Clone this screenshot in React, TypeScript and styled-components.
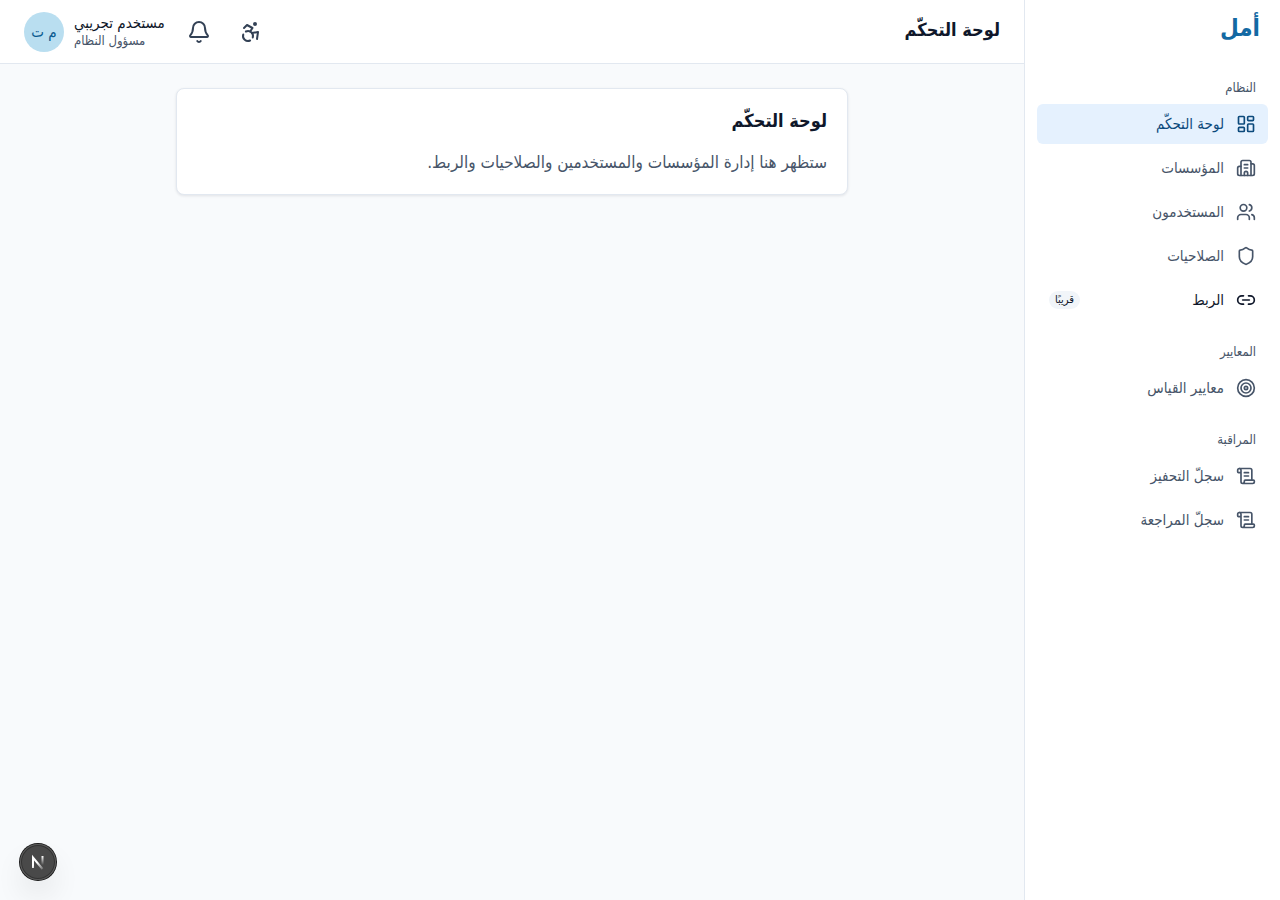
import React from "react";
import styled, { createGlobalStyle } from "styled-components";
import {
  Accessibility,
  Bell,
  Building2,
  LayoutDashboard,
  Link2,
  ScrollText,
  Shield,
  Target,
  Users,
  type LucideIcon,
} from "lucide-react";

const GlobalStyle = createGlobalStyle`
  * { box-sizing: border-box; }
  body {
    margin: 0;
    background: #f8fafc;
    color: #0f172a;
    font-family: "DejaVu Sans Condensed", "DejaVu Sans", sans-serif;
    font-size: 17px;
  }
`;

const Shell = styled.div`
  display: flex;
  min-height: 100vh;
`;

const Sidebar = styled.aside`
  width: 256px;
  flex-shrink: 0;
  background: #fff;
  border-inline-end: 1px solid #e2e8f0;
`;

const Brand = styled.a`
  display: flex;
  align-items: center;
  height: 56px;
  padding: 0 20px;
  color: #1369a3;
  font-size: 24px;
  font-weight: 700;
  text-decoration: none;
`;

const Nav = styled.nav`
  display: flex;
  flex-direction: column;
  gap: 16px;
  padding: 16px 12px;
`;

const SectionTitle = styled.h2`
  margin: 0;
  padding: 0 12px;
  font-size: 13px;
  font-weight: 400;
  line-height: 32px;
  color: #475569;
`;

const List = styled.ul`
  display: flex;
  flex-direction: column;
  gap: 4px;
  margin: 0;
  padding: 0;
  list-style: none;
`;

const NavLink = styled.a<{ $tone: "active" | "normal" | "soon" }>`
  display: flex;
  align-items: center;
  gap: 12px;
  height: 40px;
  padding: 0 12px;
  border-radius: 6px;
  font-size: 15px;
  text-decoration: none;
  background: ${(p) => (p.$tone === "active" ? "#e5f1fe" : "transparent")};
  color: ${(p) =>
    p.$tone === "active" ? "#0c4a7c" : p.$tone === "soon" ? "#0f172a" : "#475569"};
`;

const SoonBadge = styled.span`
  margin-inline-start: auto;
  padding: 0 6px;
  border-radius: 9px;
  background: #f1f5f9;
  font-size: 11px;
  line-height: 18px;
`;

const Column = styled.div`
  flex: 1;
  min-width: 0;
`;

const TopBar = styled.header`
  display: flex;
  align-items: center;
  justify-content: space-between;
  height: 64px;
  padding: 0 24px;
  background: #fff;
  border-bottom: 1px solid #e2e8f0;
`;

const PageTitle = styled.h1`
  margin: 0;
  padding-bottom: 4px;
  font-size: 18px;
  font-weight: 700;
  line-height: 28px;
`;

const Tools = styled.div`
  display: flex;
  align-items: center;
  gap: 8px;
`;

const IconButton = styled.button`
  display: grid;
  place-items: center;
  width: 44px;
  height: 44px;
  padding: 0;
  border: 0;
  border-radius: 6px;
  background: transparent;
  color: #334155;
  cursor: pointer;
`;

const UserButton = styled.button`
  display: flex;
  align-items: center;
  gap: 10px;
  padding: 0;
  padding-inline-start: 4px;
  border: 0;
  background: transparent;
  color: inherit;
  font: inherit;
  text-align: end;
  cursor: pointer;
`;

const UserName = styled.span`
  display: block;
  font-size: 15px;
  line-height: 18px;
`;

const UserRole = styled.span`
  display: block;
  font-size: 13px;
  line-height: 18px;
  color: #475569;
`;

const Avatar = styled.span`
  display: grid;
  place-items: center;
  width: 40px;
  height: 40px;
  border-radius: 50%;
  background: #b9def0;
  color: #0b5a8f;
  font-size: 15px;
`;

const Main = styled.main`
  padding: 24px;
`;

const Card = styled.section`
  max-width: 672px;
  margin: 0 auto;
  padding: 17px 20px 16px;
  border: 1px solid #e2e8f0;
  border-radius: 8px;
  background: #fff;
  box-shadow: 0 1px 3px rgba(15, 23, 42, 0.1);
`;

const CardTitle = styled.h2`
  margin: 0 0 10px;
  font-size: 18px;
  font-weight: 700;
  line-height: 30px;
`;

const CardText = styled.p`
  margin: 0;
  font-size: 17px;
  line-height: 32px;
  color: #475569;
`;

const DevButton = styled.button`
  position: fixed;
  left: 20px;
  bottom: 20px;
  display: grid;
  place-items: center;
  width: 36px;
  height: 36px;
  padding: 0;
  border: 0;
  border-radius: 50%;
  background: #494949;
  box-shadow: 0 0 0 1px #171717, inset 0 0 0 1px #5c5c5c, inset 0 0 0 2px #333,
    0 16px 32px -8px rgba(0, 0, 0, 0.24);
`;

type Item = { label: string; icon: LucideIcon; tone?: "active" | "soon" };

const sections: { title: string; items: Item[] }[] = [
  {
    title: "النظام",
    items: [
      { label: "لوحة التحكّم", icon: LayoutDashboard, tone: "active" },
      { label: "المؤسسات", icon: Building2 },
      { label: "المستخدمون", icon: Users },
      { label: "الصلاحيات", icon: Shield },
      { label: "الربط", icon: Link2, tone: "soon" },
    ],
  },
  { title: "المعايير", items: [{ label: "معايير القياس", icon: Target }] },
  {
    title: "المراقبة",
    items: [
      { label: "سجلّ التحفيز", icon: ScrollText },
      { label: "سجلّ المراجعة", icon: ScrollText },
    ],
  },
];

export default function App() {
  return (
    <Shell dir="rtl" lang="ar">
      <GlobalStyle />
      <Sidebar>
        <Brand href="#">أمل</Brand>
        <Nav>
          {sections.map((section) => (
            <div key={section.title}>
              <SectionTitle>{section.title}</SectionTitle>
              <List>
                {section.items.map(({ label, icon: Icon, tone }) => (
                  <li key={label}>
                    <NavLink
                      href="#"
                      $tone={tone ?? "normal"}
                      aria-current={tone === "active" ? "page" : undefined}
                    >
                      <Icon size={20} />
                      <span>{label}</span>
                      {tone === "soon" && <SoonBadge>قريبًا</SoonBadge>}
                    </NavLink>
                  </li>
                ))}
              </List>
            </div>
          ))}
        </Nav>
      </Sidebar>
      <Column>
        <TopBar>
          <PageTitle>لوحة التحكّم</PageTitle>
          <Tools>
            <IconButton aria-label="إمكانية الوصول">
              <Accessibility size={24} />
            </IconButton>
            <IconButton aria-label="الإشعارات">
              <Bell size={24} />
            </IconButton>
            <UserButton>
              <span>
                <UserName>مستخدم تجريبي</UserName>
                <UserRole>مسؤول النظام</UserRole>
              </span>
              <Avatar>م ت</Avatar>
            </UserButton>
          </Tools>
        </TopBar>
        <Main>
          <Card>
            <CardTitle>لوحة التحكّم</CardTitle>
            <CardText>ستظهر هنا إدارة المؤسسات والمستخدمين والصلاحيات والربط.</CardText>
          </Card>
        </Main>
      </Column>
      <DevButton aria-label="Next.js">
        <svg width="16" height="16" viewBox="0 0 16 16" fill="none">
          <defs>
            <linearGradient id="diagonal" x1="8" y1="8" x2="13" y2="15" gradientUnits="userSpaceOnUse">
              <stop stopColor="#fff" />
              <stop offset="1" stopColor="#fff" stopOpacity="0.2" />
            </linearGradient>
            <linearGradient id="stem" x1="12" y1="2" x2="12" y2="11" gradientUnits="userSpaceOnUse">
              <stop stopColor="#fff" />
              <stop offset="1" stopColor="#fff" stopOpacity="0" />
            </linearGradient>
          </defs>
          <path d="M3 14V3.500L12.500 15" stroke="url(#diagonal)" strokeWidth="2" />
          <path d="M12.500 2v9.500" stroke="url(#stem)" strokeWidth="2" />
        </svg>
      </DevButton>
    </Shell>
  );
}
